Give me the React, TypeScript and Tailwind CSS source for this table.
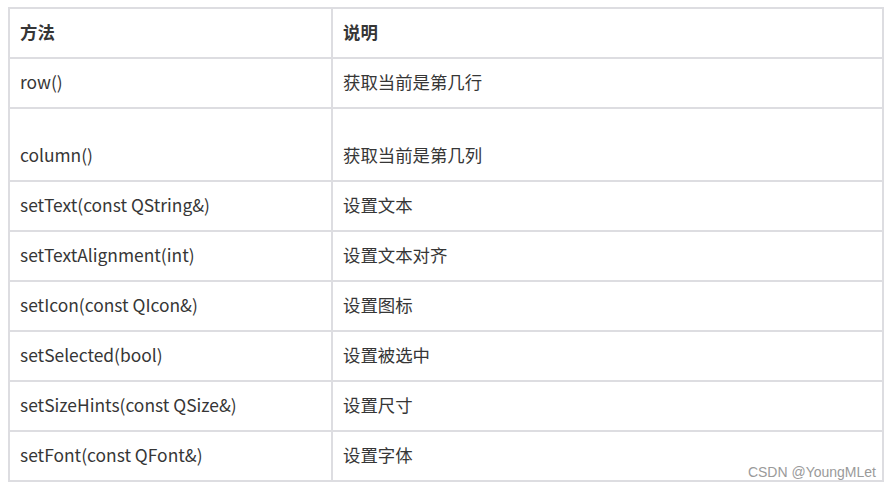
import React from "react";

const rows: { method: string; desc: string; tall?: boolean }[] = [
  { method: "row()", desc: "获取当前是第几行" },
  { method: "column()", desc: "获取当前是第几列", tall: true },
  { method: "setText(const QString&)", desc: "设置文本" },
  { method: "setTextAlignment(int)", desc: "设置文本对齐" },
  { method: "setIcon(const QIcon&)", desc: "设置图标" },
  { method: "setSelected(bool)", desc: "设置被选中" },
  { method: "setSizeHints(const QSize&)", desc: "设置尺寸" },
  { method: "setFont(const QFont&)", desc: "设置字体" },
];

export default function App() {
  return (
    <div
      className="w-[891px] h-[490px] bg-white pt-[7px] pl-[8px] text-[#363636]"
      style={{ fontFamily: '"Noto Sans CJK SC", "Noto Sans", sans-serif' }}
    >
      <div className="relative w-[876px] border-t-2 border-x-2 border-[#dddde1] text-[17.4px] leading-[23px]">
        <div className="flex h-[50px] border-b-2 border-[#dddde1] font-bold">
          <div className="w-[323px] shrink-0 border-r-2 border-[#dddde1] flex items-center pl-[10px] pb-[3px]">
            方法
          </div>
          <div className="flex-1 flex items-center pl-[10px] pb-[3px]">说明</div>
        </div>
        {rows.map((r) => (
          <div
            key={r.method}
            className={`flex border-b-2 border-[#dddde1] ${r.tall ? "h-[73px]" : "h-[50px]"}`}
          >
            <div
              className={`w-[323px] shrink-0 border-r-2 border-[#dddde1] flex items-center pl-[10px] pb-[3px] ${r.tall ? "pt-[23px]" : ""}`}
            >
              {r.method}
            </div>
            <div
              className={`flex-1 flex items-center pl-[10px] pb-[3px] ${r.tall ? "pt-[23px]" : ""}`}
            >
              {r.desc}
            </div>
          </div>
        ))}
        <div
          className="absolute right-[6px] bottom-[1px] text-[14px] leading-[18px] text-[#9a9a9a]"
          style={{ fontFamily: '"Liberation Sans", Arial, sans-serif' }}
        >
          CSDN @YoungMLet
        </div>
      </div>
    </div>
  );
}
